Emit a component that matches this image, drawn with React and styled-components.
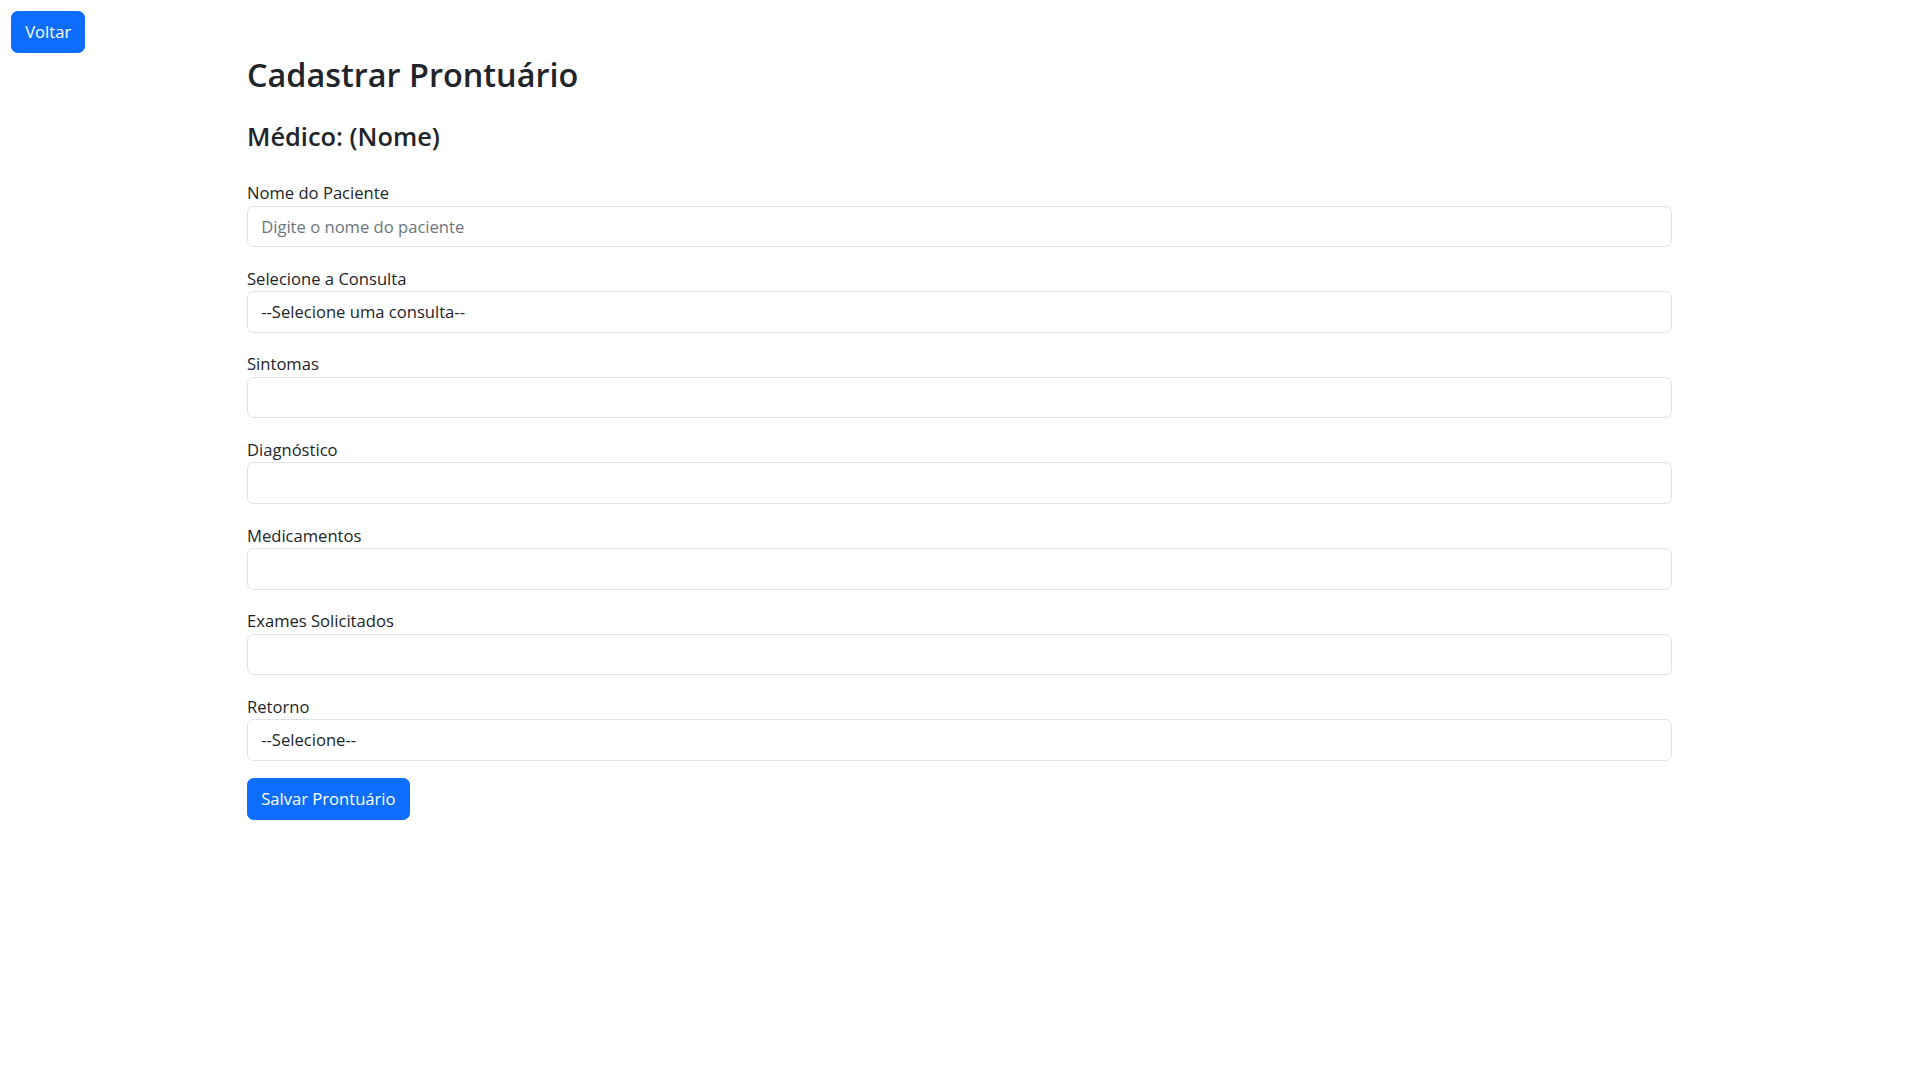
import React from "react";
import styled, { createGlobalStyle } from "styled-components";

const GlobalStyle = createGlobalStyle`
  * { box-sizing: border-box; }
  html, body { margin: 0; padding: 0; background: #fff; }
  body {
    font-family: "Open Sans", "Noto Sans", sans-serif;
    font-size: 16.6px;
    line-height: 26.4px;
    color: #212529;
  }
`;

const TopBar = styled.div`
  display: flex;
  padding: 11px 0 0 11px;
`;

const Button = styled.button`
  font-family: inherit;
  font-size: 16.6px;
  line-height: 26.4px;
  padding: 6.6px 13.2px;
  border: 1px solid #0d6efd;
  border-radius: 6.6px;
  background: #0d6efd;
  color: #fff;
  cursor: pointer;
`;

const Container = styled.main`
  width: 1425px;
  margin: 0 auto;
`;

const Title = styled.h2`
  margin: 0 0 26.4px;
  font-size: 32.4px;
  line-height: 42.2px;
  font-weight: 600;
  color: #212529;
`;

const Subtitle = styled.h4`
  margin: 0 0 26.4px;
  font-size: 25.4px;
  line-height: 31.7px;
  font-weight: 600;
  color: #212529;
`;

const Form = styled.form`
  display: flex;
  flex-direction: column;
  align-items: flex-start;
`;

const Group = styled.div`
  width: 100%;
  margin-bottom: 17.6px;
`;

const Label = styled.label`
  display: block;
  padding-top: 2px;
  font-size: 16.6px;
  line-height: 24.4px;
  color: #212529;
`;

const fieldCss = `
  display: block;
  width: 100%;
  height: 41.6px;
  padding: 6.6px 13.2px;
  font-family: inherit;
  font-size: 16.6px;
  line-height: 26.4px;
  color: #212529;
  background: #fff;
  border: 1px solid #dee2e6;
  border-radius: 6.6px;
  appearance: none;
  -webkit-appearance: none;
  outline: none;
`;

const Input = styled.input`
  ${fieldCss}
  &::placeholder { color: #6c757d; opacity: 1; }
`;

const Select = styled.select`
  ${fieldCss}
`;

const fields = [
  { label: "Sintomas" },
  { label: "Diagnóstico" },
  { label: "Medicamentos" },
  { label: "Exames Solicitados" },
];

export default function App() {
  return (
    <>
      <GlobalStyle />
      <TopBar>
        <Button type="button">Voltar</Button>
      </TopBar>
      <Container>
        <Title>Cadastrar Prontuário</Title>
        <Subtitle>Médico: (Nome)</Subtitle>
        <Form onSubmit={(e) => e.preventDefault()}>
          <Group>
            <Label htmlFor="paciente">Nome do Paciente</Label>
            <Input id="paciente" placeholder="Digite o nome do paciente" />
          </Group>
          <Group>
            <Label htmlFor="consulta">Selecione a Consulta</Label>
            <Select id="consulta" defaultValue="">
              <option value="">--Selecione uma consulta--</option>
            </Select>
          </Group>
          {fields.map((f) => (
            <Group key={f.label}>
              <Label>{f.label}</Label>
              <Input />
            </Group>
          ))}
          <Group>
            <Label htmlFor="retorno">Retorno</Label>
            <Select id="retorno" defaultValue="">
              <option value="">--Selecione--</option>
            </Select>
          </Group>
          <Button type="submit">Salvar Prontuário</Button>
        </Form>
      </Container>
    </>
  );
}
